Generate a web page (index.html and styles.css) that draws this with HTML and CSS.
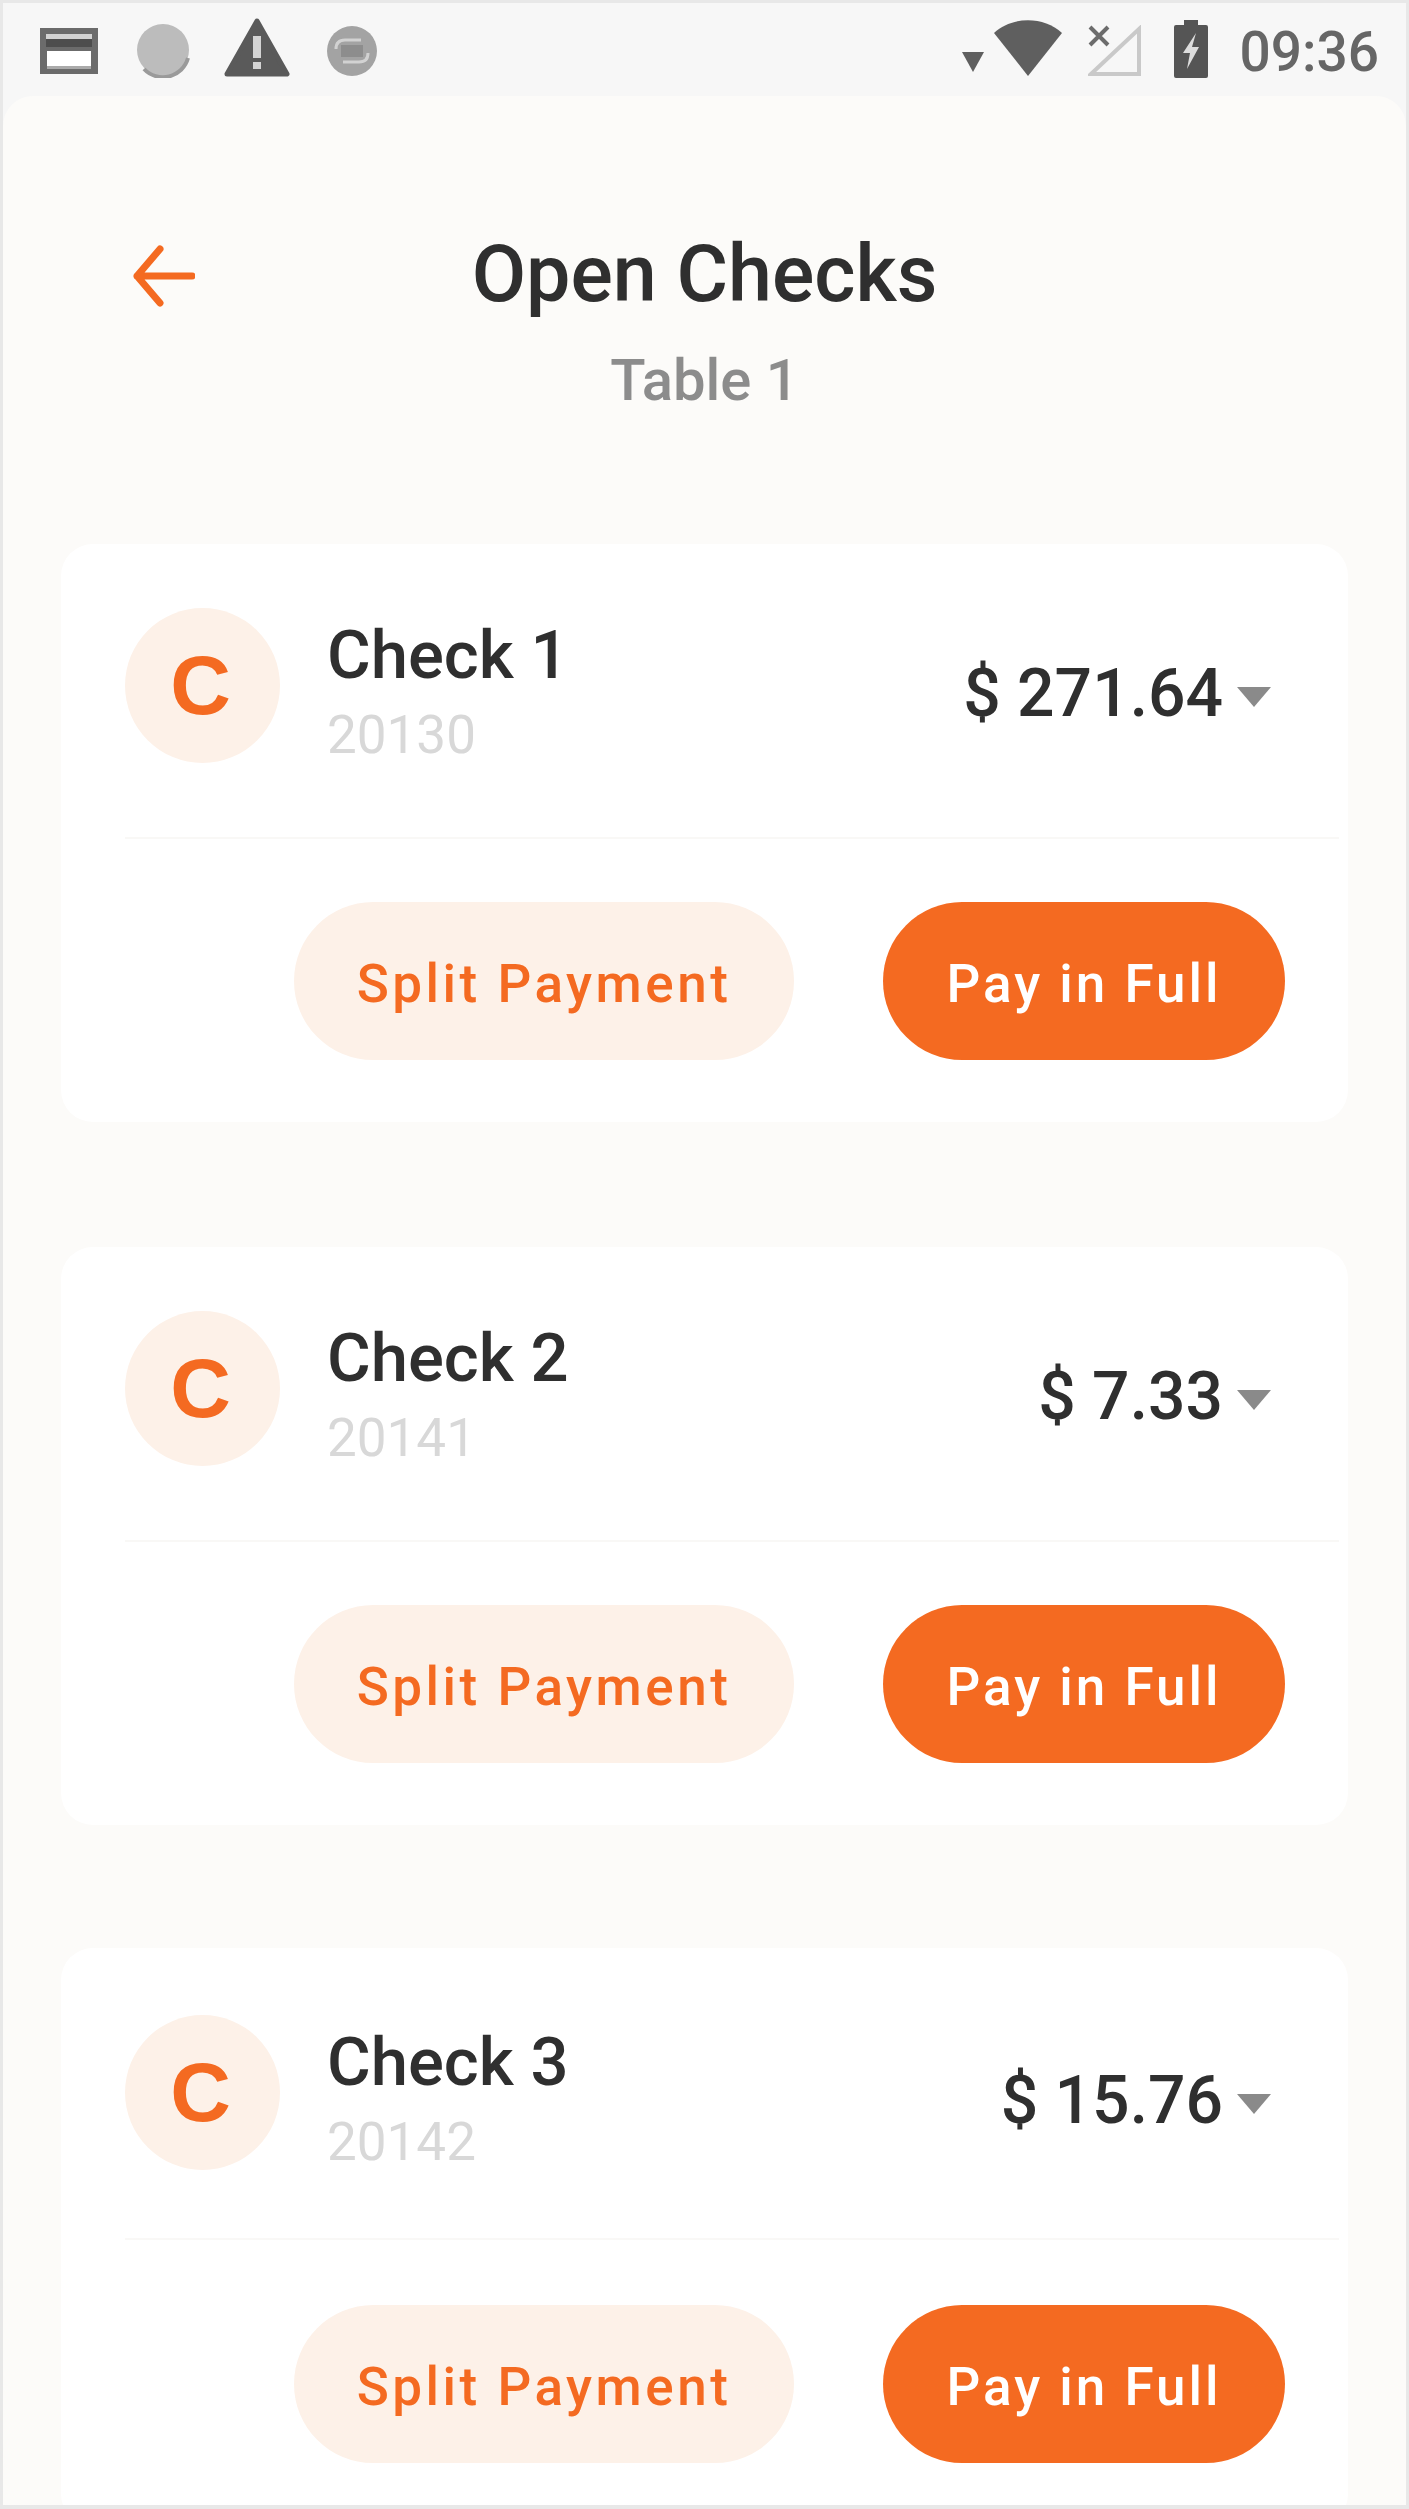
FILE: index.html
```html
<!DOCTYPE html>
<html lang="en">
<head>
    <meta charset="UTF-8">
    <meta name="viewport" content="width=device-width, initial-scale=1.0">
    <title>Open Checks</title>
    <link rel="stylesheet" href="styles.css">
</head>
<body>
    <div class="screen">
        <div class="status-bar">
            <div class="status-group status-left">
                <svg class="icon-card" viewBox="0 0 58 46"><path fill="#6b6b6b" d="M0 0h58v46H0z"/><path fill="#d2d2d2" d="M6 6h46v5H6z"/><path fill="#4d4d4d" d="M6 11h46v8H6z"/><path fill="#fff" d="M7 23h44v15H7z"/><path fill="#aaa" d="M7 38h44v3H7z"/></svg>
                <svg class="icon-dot" viewBox="0 0 54 56"><circle cx="27" cy="28" r="26" fill="#bcbcbc"/><path fill="none" stroke="#9a9a9a" stroke-width="4" d="M8 47a26 26 0 0 0 44-11"/></svg>
                <svg class="icon-warn" viewBox="0 0 66 60"><path fill="#5a5a5a" stroke="#5a5a5a" stroke-width="5" stroke-linejoin="round" d="M33 4 63 57H3z"/><path fill="#d4d4d4" d="M29 19h8v22h-8zM29 45h8v7h-8z"/></svg>
                <svg class="icon-sync" viewBox="0 0 54 52"><circle cx="27" cy="26" r="25" fill="#a3a3a3"/><path fill="none" stroke="#d2d2d2" stroke-width="3" d="M11 24c0-6 3-9 9-9h16M43 28c0 6-3 9-9 9H18"/><path fill="#8d8d8d" d="M16 20h22v12H16z"/></svg>
            </div>
            <div class="status-group status-right">
                <svg class="icon-data" viewBox="0 0 22 20"><path fill="#5f5f5f" d="M0 0h22L11 20z"/></svg>
                <svg class="icon-wifi" viewBox="0 0 68 56"><path fill="#5f5f5f" d="M0 13C18-4 50-4 68 13L34 56z"/></svg>
                <svg class="icon-signal" viewBox="0 0 54 52"><path fill="none" stroke="#c9c9c9" stroke-width="4" d="M3 49 51 4v45z"/><path fill="none" stroke="#6c6c6c" stroke-width="4" d="M2 2l18 18M20 2 2 20"/></svg>
                <svg class="icon-battery" viewBox="0 0 34 58"><path fill="#555" d="M10 0h14v5h8a2 2 0 0 1 2 2v49a2 2 0 0 1-2 2H2a2 2 0 0 1-2-2V7a2 2 0 0 1 2-2h8z"/><path fill="#ddd" d="M22 13 9 33h7l-3 16 12-22h-7l4-14z"/></svg>
                <span class="clock">09:36</span>
            </div>
        </div>

        <div class="panel">
            <div class="header">
                <svg class="back" viewBox="0 0 62 62"><path fill="none" stroke="#f46a21" stroke-width="7" stroke-linecap="round" stroke-linejoin="round" d="M59 31H4M27 4 4 31l23 27"/></svg>
                <div class="titles">
                    <h1>Open Checks</h1>
                    <p>Table 1</p>
                </div>
            </div>

            <div class="check">
                <div class="check-top">
                    <div class="avatar">C</div>
                    <div class="check-info">
                        <div class="check-name">Check 1</div>
                        <div class="check-id">20130</div>
                    </div>
                    <div class="amount">$ 271.64</div>
                    <div class="caret"></div>
                </div>
                <div class="check-actions">
                    <button class="btn btn-light">Split Payment</button>
                    <button class="btn btn-solid">Pay in Full</button>
                </div>
            </div>

            <div class="check">
                <div class="check-top">
                    <div class="avatar">C</div>
                    <div class="check-info">
                        <div class="check-name">Check 2</div>
                        <div class="check-id">20141</div>
                    </div>
                    <div class="amount">$ 7.33</div>
                    <div class="caret"></div>
                </div>
                <div class="check-actions">
                    <button class="btn btn-light">Split Payment</button>
                    <button class="btn btn-solid">Pay in Full</button>
                </div>
            </div>

            <div class="check check-last">
                <div class="check-top">
                    <div class="avatar">C</div>
                    <div class="check-info">
                        <div class="check-name">Check 3</div>
                        <div class="check-id">20142</div>
                    </div>
                    <div class="amount">$ 15.76</div>
                    <div class="caret"></div>
                </div>
                <div class="check-actions">
                    <button class="btn btn-light">Split Payment</button>
                    <button class="btn btn-solid">Pay in Full</button>
                </div>
            </div>
        </div>
    </div>
</body>
</html>
```

FILE: styles.css
```css
html, body {
    margin: 0;
    padding: 0;
    height: 2509px;
    overflow: hidden;
    background-color: #e8e8e8;
}
body {
    font-family: Roboto, "Liberation Sans", sans-serif;
}
.screen {
    box-sizing: border-box;
    height: 2505px;
    margin: 0 3px 0 3px;
    padding-top: 3px;
    overflow: hidden;
    background-color: #f7f7f7;
    background-clip: content-box;
}
.status-bar {
    display: flex;
    justify-content: space-between;
    align-items: flex-start;
    height: 79px;
    padding: 14px 27px 0 34px;
}
.status-group {
    display: flex;
    align-items: flex-start;
}
.icon-card { width: 58px; height: 46px; margin-top: 11px; margin-left: 3px; }
.icon-dot { width: 54px; height: 56px; margin: 5px 0 0 38px; }
.icon-warn { width: 66px; height: 60px; margin-left: 34px; }
.icon-sync { width: 54px; height: 52px; margin: 8px 0 0 35px; }
.icon-data { width: 22px; height: 20px; margin-top: 35px; }
.icon-wifi { width: 68px; height: 56px; margin: 3px 0 0 10px; }
.icon-signal { width: 54px; height: 52px; margin: 8px 0 0 26px; }
.icon-battery { width: 34px; height: 58px; margin: 3px 0 0 32px; }
.clock {
    margin-left: 31px;
    margin-top: 3px;
    font-size: 55px;
    line-height: 64px;
    font-weight: 500;
    color: #666;
}
.panel {
    height: 2423px;
    padding: 0 58px 0 58px;
    background-color: #fcfbf9;
    border-radius: 30px 30px 0 0;
}
.header {
    position: relative;
    height: 448px;
    text-align: center;
}
.back {
    position: absolute;
    left: 72px;
    top: 149px;
    width: 62px;
    height: 62px;
}
.titles {
    padding-top: 133px;
}
h1 {
    margin: 0;
    font-size: 79px;
    line-height: 90px;
    font-weight: 500;
    color: #2f2f2f;
}
p {
    margin: 28px 0 0;
    font-size: 58px;
    line-height: 66px;
    font-weight: 500;
    color: #8c8c8c;
}
.check {
    height: 578px;
    margin-bottom: 125px;
    background-color: #fff;
    border-radius: 32px;
}
.check-last {
    margin-top: -2px;
}
.check-top {
    box-sizing: border-box;
    display: flex;
    align-items: flex-start;
    height: 295px;
    padding-top: 64px;
    margin: 0 9px 0 64px;
    border-bottom: 2px solid #f9f8f6;
}
.check-last .check-top {
    height: 292px;
    padding-top: 67px;
}
.avatar {
    flex: none;
    display: flex;
    align-items: center;
    justify-content: center;
    width: 155px;
    height: 155px;
    border-radius: 50%;
    background-color: #fdf1e8;
    color: #f46a21;
    font-family: "Liberation Sans", Arial, sans-serif;
    font-size: 84px;
    font-weight: 700;
    padding-right: 4px;
    box-sizing: border-box;
}
.check-info {
    flex: 1;
    margin: 11px 0 0 47px;
}
.check-name {
    font-size: 67px;
    line-height: 72px;
    font-weight: 500;
    color: #2f2f2f;
}
.check-id {
    margin-top: 14px;
    font-size: 53px;
    line-height: 60px;
    color: #d8d8d8;
}
.amount {
    margin-top: 48px;
    font-size: 66px;
    line-height: 76px;
    font-weight: 500;
    color: #2f2f2f;
}
.caret {
    width: 0;
    height: 0;
    margin: 79px 68px 0 14px;
    border-left: 17px solid transparent;
    border-right: 17px solid transparent;
    border-top: 20px solid #8a8a8a;
}
.check-actions {
    display: flex;
    justify-content: flex-end;
    gap: 89px;
    margin-top: 63px;
    padding-right: 63px;
}
.check-last .check-actions {
    margin-top: 65px;
}
.btn {
    height: 158px;
    padding: 5px 0 0;
    border: none;
    border-radius: 79px;
    font-family: inherit;
    font-size: 53px;
    font-weight: 500;
    letter-spacing: 3.5px;
}
.btn-light {
    width: 500px;
    background-color: #fdf1e8;
    color: #f46a21;
}
.btn-solid {
    width: 402px;
    background-color: #f46a21;
    color: #fff;
    letter-spacing: 3px;
}
```
